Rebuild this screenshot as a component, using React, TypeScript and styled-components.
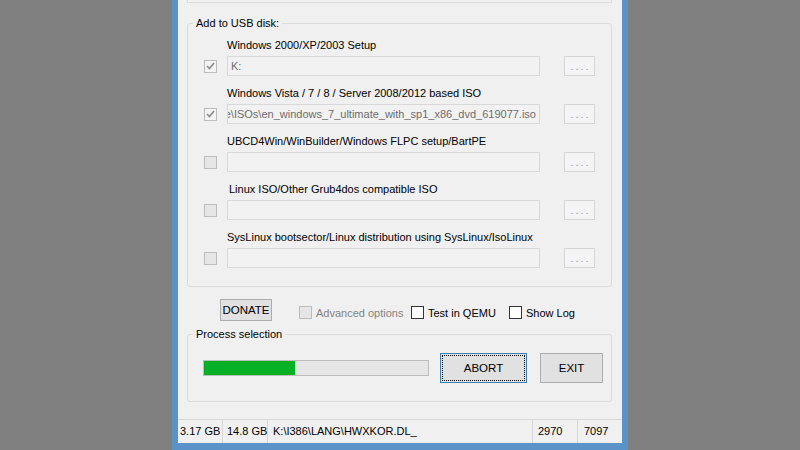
import React from 'react'
import styled, { createGlobalStyle } from 'styled-components'

const GlobalStyle = createGlobalStyle`
  html, body {
    margin: 0;
    padding: 0;
    background: #808080;
  }
  body {
    font-family: "Liberation Sans", Arial, sans-serif;
    font-size: 11px;
    color: #000;
  }
`

// Gray desktop with the cropped dialog centered in it
const Screen = styled.div`
  width: 800px;
  height: 450px;
  overflow: hidden;
  display: flex;
  justify-content: center;
  align-items: flex-end;
  background: #808080;
`

const Window = styled.div`
  width: 444px;
  height: 443px;
  border: 6px solid #5b93c9;
  border-top: none;
  border-bottom-width: 7px;
  background: #f0f0f0;
  display: flex;
  flex-direction: column;
`

// Bottom edge of the group box that is cut off above
const PrevGroup = styled.div`
  height: 2px;
  margin: 0 10px 0 9px;
  border: 1px solid #dcdcdc;
  border-top: none;
`

const GroupBox = styled.fieldset<{ $top: number }>`
  margin: ${({ $top }) => $top}px 10px 0 9px;
  padding: 0;
  min-width: 0;
  border: 1px solid #dcdcdc;
  border-radius: 3px;
`

const Legend = styled.legend`
  margin-left: 5px;
  padding: 0 3px;
  line-height: 14px;
  font-size: 11px;
`

const SourceList = styled.div`
  display: flex;
  flex-direction: column;
  gap: 10px;
  padding: 8px 16px 18px 16px;
`

const SourceItem = styled.div`
  display: flex;
  flex-direction: column;
  gap: 4px;
`

const SourceLabel = styled.div<{ $shift?: number }>`
  margin-left: ${({ $shift = 0 }) => 23 + $shift}px;
  line-height: 14px;
  white-space: nowrap;
`

const SourceRow = styled.div`
  display: flex;
  align-items: center;
  height: 20px;
`

const CheckBox = styled.span<{ $dark?: boolean; $disabled?: boolean }>`
  box-sizing: border-box;
  width: 13px;
  height: 13px;
  flex: none;
  display: flex;
  align-items: center;
  justify-content: center;
  border: 1px solid ${({ $dark }) => ($dark ? '#333' : '#bcbcbc')};
  background: ${({ $dark, $disabled }) => ($dark ? '#fff' : $disabled ? '#e6e6e6' : '#f4f4f4')};
`

const PathField = styled.div<{ $clipLeft?: boolean }>`
  box-sizing: border-box;
  width: 313px;
  height: 20px;
  margin-left: 10px;
  padding: 0 3px;
  display: flex;
  align-items: center;
  justify-content: ${({ $clipLeft }) => ($clipLeft ? 'flex-end' : 'flex-start')};
  overflow: hidden;
  white-space: nowrap;
  border: 1px solid #d9d9d9;
  background: #f2f2f2;
  color: #6d6d6d;
`

const BrowseButton = styled.div`
  box-sizing: border-box;
  width: 31px;
  height: 20px;
  margin-left: 24px;
  display: flex;
  align-items: center;
  justify-content: center;
  border: 1px solid #d5d5d5;
  background: #f4f4f4;
  color: #a0a0a0;
  letter-spacing: 2px;
  line-height: 14px;
  padding-left: 2px;
`

const ControlsRow = styled.div`
  display: flex;
  align-items: center;
  height: 22px;
  margin-top: 12px;
  padding-left: 42px;
`

const PushButton = styled.button<{ $w: number; $h: number; $gap?: number; $focused?: boolean }>`
  box-sizing: border-box;
  width: ${({ $w }) => $w}px;
  height: ${({ $h }) => $h}px;
  margin: 0 0 0 ${({ $gap = 0 }) => $gap}px;
  padding: 0;
  flex: none;
  font-family: "Liberation Sans", Arial, sans-serif;
  font-size: 11.5px;
  color: #000;
  background: #e1e1e1;
  border: 1px solid ${({ $focused }) => ($focused ? '#3c7fb1' : '#adadad')};
  outline: ${({ $focused }) => ($focused ? '1px dotted #000' : 'none')};
  outline-offset: -3px;
`

const CheckOption = styled.label<{ $w: number; $gap?: number; $disabled?: boolean }>`
  width: ${({ $w }) => $w}px;
  margin-left: ${({ $gap = 0 }) => $gap}px;
  margin-top: 5px;
  display: flex;
  align-items: center;
  gap: 4px;
  white-space: nowrap;
  font-size: 11px;
  color: ${({ $disabled }) => ($disabled ? '#838383' : '#000')};
`

const ProcessRow = styled.div`
  display: flex;
  align-items: center;
  padding: 12px 0 18px 15px;
`

const Progress = styled.div`
  box-sizing: border-box;
  width: 226px;
  height: 16px;
  border: 1px solid #bcbcbc;
  background: #e6e6e6;
`

const ProgressFill = styled.div`
  height: 100%;
  background: #06b025;
`

const StatusBar = styled.div`
  margin-top: auto;
  height: 24px;
  box-sizing: border-box;
  display: flex;
  border-top: 1px solid #d7d7d7;
  font-size: 11px;
`

const StatusCell = styled.div<{ $w: number; $pad?: number; $last?: boolean }>`
  box-sizing: border-box;
  width: ${({ $w }) => $w}px;
  padding-left: ${({ $pad = 5 }) => $pad}px;
  line-height: 23px;
  white-space: nowrap;
  border-right: ${({ $last }) => ($last ? 'none' : '1px solid #d7d7d7')};
`

const Tick = () => (
  <svg width="9" height="8" viewBox="0 0 9 8">
    <polyline points="1,4 3.5,6.5 8,1" fill="none" stroke="#8a8a8a" strokeWidth="1.6" />
  </svg>
)

const sources = [
  { label: 'Windows 2000/XP/2003 Setup', path: 'K:', checked: true },
  {
    label: 'Windows Vista / 7 / 8 / Server 2008/2012 based ISO',
    path: 'D:\\Software\\ISOs\\en_windows_7_ultimate_with_sp1_x86_dvd_619077.iso',
    checked: true,
    clip: true,
  },
  { label: 'UBCD4Win/WinBuilder/Windows FLPC setup/BartPE', path: '', checked: false },
  { label: 'Linux ISO/Other Grub4dos compatible ISO', path: '', checked: false, shift: 2 },
  { label: 'SysLinux bootsector/Linux distribution using SysLinux/IsoLinux', path: '', checked: false },
]

const progress = 0.405

export default function App() {
  return (
    <>
      <GlobalStyle />
      <Screen>
        <Window>
          <PrevGroup />

          <GroupBox $top={13}>
            <Legend>Add to USB disk:</Legend>
            <SourceList>
              {sources.map((s) => (
                <SourceItem key={s.label}>
                  <SourceLabel $shift={s.shift}>{s.label}</SourceLabel>
                  <SourceRow>
                    <CheckBox $disabled={!s.checked}>{s.checked && <Tick />}</CheckBox>
                    <PathField $clipLeft={s.clip}>{s.path}</PathField>
                    <BrowseButton>....</BrowseButton>
                  </SourceRow>
                </SourceItem>
              ))}
            </SourceList>
          </GroupBox>

          <ControlsRow>
            <PushButton $w={52} $h={22}>DONATE</PushButton>
            <CheckOption $w={112} $gap={27} $disabled>
              <CheckBox $disabled />
              Advanced options
            </CheckOption>
            <CheckOption $w={98}>
              <CheckBox $dark />
              Test in QEMU
            </CheckOption>
            <CheckOption $w={80}>
              <CheckBox $dark />
              Show Log
            </CheckOption>
          </ControlsRow>

          <GroupBox $top={6}>
            <Legend>Process selection</Legend>
            <ProcessRow>
              <Progress>
                <ProgressFill style={{ width: `${progress * 100}%` }} />
              </Progress>
              <PushButton $w={87} $h={30} $gap={11} $focused>
                ABORT
              </PushButton>
              <PushButton $w={63} $h={30} $gap={13}>
                EXIT
              </PushButton>
            </ProcessRow>
          </GroupBox>

          <StatusBar>
            <StatusCell $w={45} $pad={2}>3.17 GB</StatusCell>
            <StatusCell $w={45} $pad={4}>14.8 GB</StatusCell>
            <StatusCell $w={265}>K:\I386\LANG\HWXKOR.DL_</StatusCell>
            <StatusCell $w={45}>2970</StatusCell>
            <StatusCell $w={44} $pad={6} $last>
              7097
            </StatusCell>
          </StatusBar>
        </Window>
      </Screen>
    </>
  )
}
